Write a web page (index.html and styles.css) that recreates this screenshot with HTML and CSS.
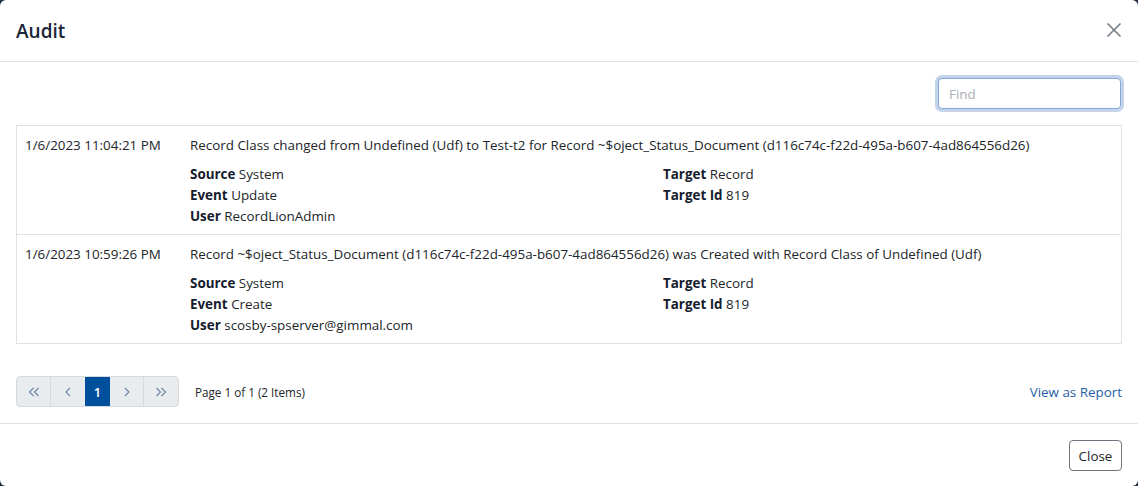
FILE: index.html
```html
<!DOCTYPE html>
<html lang="en">
<head>
<meta charset="utf-8">
<title>Audit</title>
<link rel="stylesheet" href="styles.css">
</head>
<body>
<div class="modal">
  <header class="modal-header">
    <h5 class="modal-title">Audit</h5>
    <button class="btn-close" aria-label="Close">
      <svg width="16" height="16" viewBox="0 0 16 16"><path d="M1.5 1.5 L14.5 14.5 M14.5 1.5 L1.5 14.5" stroke="#737b85" stroke-width="1.6" fill="none"/></svg>
    </button>
  </header>
  <div class="modal-body">
    <div class="toolbar">
      <input class="find" type="text" placeholder="Find">
    </div>
    <div class="audit-list">
      <div class="audit-row">
        <div class="audit-date">1/6/2023 11:04:21 PM</div>
        <div class="audit-content">
          <div class="audit-msg">Record Class changed from Undefined (Udf) to Test-t2 for Record ~$oject_Status_Document (d116c74c-f22d-495a-b607-4ad864556d26)</div>
          <div class="audit-details">
            <div class="detail-col">
              <div><b>Source</b> System</div>
              <div><b>Event</b> Update</div>
              <div><b>User</b> RecordLionAdmin</div>
            </div>
            <div class="detail-col">
              <div><b>Target</b> Record</div>
              <div><b>Target Id</b> 819</div>
            </div>
          </div>
        </div>
      </div>
      <div class="audit-row">
        <div class="audit-date">1/6/2023 10:59:26 PM</div>
        <div class="audit-content">
          <div class="audit-msg">Record ~$oject_Status_Document (d116c74c-f22d-495a-b607-4ad864556d26) was Created with Record Class of Undefined (Udf)</div>
          <div class="audit-details">
            <div class="detail-col">
              <div><b>Source</b> System</div>
              <div><b>Event</b> Create</div>
              <div><b>User</b> scosby-spserver@gimmal.com</div>
            </div>
            <div class="detail-col">
              <div><b>Target</b> Record</div>
              <div><b>Target Id</b> 819</div>
            </div>
          </div>
        </div>
      </div>
    </div>
    <div class="pager-bar">
      <div class="pager">
        <button class="pg pg-wide" aria-label="First">
          <svg width="12" height="10" viewBox="0 0 12 10"><path d="M5.5 1 L1.5 5 L5.5 9 M10.5 1 L6.5 5 L10.5 9" stroke="#6d86a6" stroke-width="1.1" fill="none"/></svg>
        </button>
        <button class="pg pg-wide" aria-label="Previous">
          <svg width="8" height="10" viewBox="0 0 8 10"><path d="M6 1 L2 5 L6 9" stroke="#6d86a6" stroke-width="1.1" fill="none"/></svg>
        </button>
        <button class="pg pg-active">1</button>
        <button class="pg pg-wide" aria-label="Next">
          <svg width="8" height="10" viewBox="0 0 8 10"><path d="M2 1 L6 5 L2 9" stroke="#6d86a6" stroke-width="1.1" fill="none"/></svg>
        </button>
        <button class="pg pg-wide pg-last" aria-label="Last">
          <svg width="12" height="10" viewBox="0 0 12 10"><path d="M1.5 1 L5.5 5 L1.5 9 M6.5 1 L10.5 5 L6.5 9" stroke="#6d86a6" stroke-width="1.1" fill="none"/></svg>
        </button>
      </div>
      <span class="page-info">Page 1 of 1 (2 Items)</span>
      <a class="report-link" href="#">View as Report</a>
    </div>
  </div>
  <footer class="modal-footer">
    <button class="btn-secondary">Close</button>
  </footer>
</div>
</body>
</html>
```
FILE: styles.css
```css
html, body {
  margin: 0;
  padding: 0;
  height: 100%;
}
body {
  background: #1d2c3e;
  font-family: "Open Sans", "Noto Sans", sans-serif;
  font-size: 13.4px;
  color: #212529;
}
.modal {
  background: #fff;
  height: 486px;
  border-radius: 6px;
  display: flex;
  flex-direction: column;
  overflow: hidden;
}
.modal-header {
  flex: 0 0 62px;
  height: 62px;
  box-sizing: border-box;
  border-bottom: 1px solid #dee2e6;
  display: flex;
  align-items: center;
  justify-content: space-between;
  padding: 0 16px 0 16px;
}
.modal-title {
  margin: 0;
  font-size: 19px;
  font-weight: 600;
  color: #1a2638;
  line-height: 24px;
}
.btn-close {
  border: 0;
  background: transparent;
  padding: 0;
  width: 16px;
  height: 16px;
  display: flex;
  margin-top: -1px;
}
.modal-body {
  padding: 16px 16px 0 16px;
  flex: 0 0 auto;
}
.toolbar {
  display: flex;
  justify-content: flex-end;
  padding-right: 1px;
}
.find {
  width: 183px;
  height: 31px;
  box-sizing: border-box;
  border: 1px solid #86a8d4;
  border-radius: 4px;
  box-shadow: 0 0 0 3px #c3d4ea;
  padding: 0 10px;
  font-family: inherit;
  font-size: 13.4px;
  color: #212529;
  outline: none;
}
.find::placeholder {
  color: #a9b0b8;
}
.audit-list {
  margin-top: 16px;
  border: 1px solid #dee2e6;
}
.audit-row {
  display: grid;
  grid-template-columns: 165px 1fr;
  padding: 9px 8px 7px 8px;
  line-height: 21px;
}
.audit-row + .audit-row {
  border-top: 1px solid #dee2e6;
}
.audit-msg {
  margin-bottom: 8px;
}
.audit-details {
  display: grid;
  grid-template-columns: 473px 1fr;
}
.detail-col b {
  font-weight: 700;
  color: #141b2d;
}
.pager-bar {
  margin-top: 32px;
  display: flex;
  align-items: center;
  height: 31px;
  padding-bottom: 16px;
}
.pager {
  display: flex;
  height: 31px;
  border: 1px solid #d6dadf;
  border-radius: 4px;
  background: #e9ecef;
  box-sizing: border-box;
  overflow: hidden;
}
.pg {
  border: 0;
  background: transparent;
  padding: 0;
  height: 29px;
  display: flex;
  align-items: center;
  justify-content: center;
  font-family: inherit;
}
.pg-wide {
  width: 34px;
  border-right: 1px solid #d6dadf;
}
.pg-wide:nth-child(2) {
  border-right: 0;
}
.pg-last {
  border-right: 0;
}
.pg-active {
  width: 25px;
  background: #004f9c;
  color: #fff;
  font-size: 13px;
  font-weight: 600;
}
.page-info {
  margin-left: 16px;
  font-size: 11.7px;
  color: #212529;
}
.report-link {
  margin-left: auto;
  color: #1f5fa6;
  text-decoration: none;
  font-size: 13.4px;
}
.modal-footer {
  flex: 0 0 auto;
  border-top: 1px solid #dee2e6;
  padding: 16px 16px 15px 16px;
  display: flex;
  justify-content: flex-end;
}
.btn-secondary {
  height: 31px;
  width: 53px;
  border: 1px solid #6c757d;
  border-radius: 4px;
  background: #fff;
  font-family: inherit;
  font-size: 13.4px;
  color: #212529;
  padding: 0;
}
```
